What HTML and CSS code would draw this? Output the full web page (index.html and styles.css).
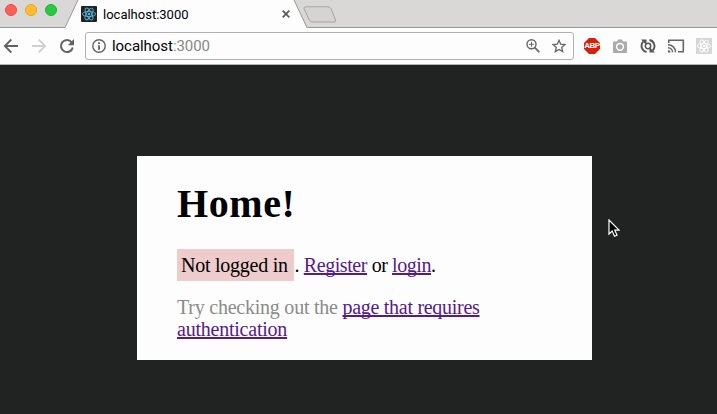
FILE: index.html
```html
<!DOCTYPE html>
<html lang="en">
<head>
<meta charset="utf-8">
<title>localhost:3000</title>
<link rel="stylesheet" href="styles.css">
</head>
<body>
<svg class="defs" width="0" height="0">
  <symbol id="atom" viewBox="0 0 16 16">
    <g fill="none" stroke="currentColor" stroke-width=".9">
      <ellipse cx="8" cy="8" rx="6.6" ry="2.6"/>
      <ellipse cx="8" cy="8" rx="6.6" ry="2.6" transform="rotate(60 8 8)"/>
      <ellipse cx="8" cy="8" rx="6.6" ry="2.6" transform="rotate(120 8 8)"/>
    </g>
    <circle cx="8" cy="8" r="1.3" fill="currentColor"/>
  </symbol>
</svg>
<header class="tabstrip">
  <div class="lights"><i class="red"></i><i class="yellow"></i><i class="green"></i></div>
  <div class="tab">
    <svg class="tab-shape" width="244" height="28" viewBox="0 0 244 28"><path d="M0 28 0 27.5 13 0H229L241.500 27.5 244 28Z" fill="#fdfdfd"/><path d="M0 27.5 13 0M229 0 242 27.5H244" fill="none" stroke="#999" stroke-width="1"/></svg>
    <svg class="favicon" width="16" height="16"><use href="#atom"/></svg>
    <span class="tab-title">localhost:3000</span>
    <svg class="close" width="8" height="8" viewBox="0 0 8 8"><path d="m.7.7 6.6 6.6m0-6.6L.7 7.3" stroke="#5a5a5a" stroke-width="1.7"/></svg>
  </div>
  <svg class="newtab" width="34" height="17" viewBox="0 0 34 17"><path d="M2.5.8H25Q27 .8 28 2.6L32.5 14Q33.2 16 31.5 16H9Q7.300 16 6.500 14.500L1 2.600Q.5.8 2.500.8Z" fill="#d5d4d3" stroke="#a5a4a4"/></svg>
</header>
<nav class="toolbar">
  <svg class="back" width="16" height="16" viewBox="0 0 16 16"><path d="M15 8H2M8.300 1.500 1.800 8l6.500 6.500" fill="none" stroke="#626262" stroke-width="1.800"/></svg>
  <svg class="forward" width="16" height="16" viewBox="0 0 16 16"><path d="M1 8h13M7.700 1.500 14.200 8l-6.500 6.500" fill="none" stroke="#d0d0d0" stroke-width="1.800"/></svg>
  <svg class="reload" width="16" height="16" viewBox="0 0 16 16"><path d="M12.700 4.300A6 6 0 1 0 13.800 9.500" fill="none" stroke="#626262" stroke-width="2"/><path d="M15 1v6.200H8.800Z" fill="#626262"/></svg>
  <div class="omnibox">
    <svg class="info" width="14" height="14" viewBox="0 0 14 14"><circle cx="7" cy="7" r="6.200" fill="none" stroke="#626262" stroke-width="1.400"/><path d="M7 3.300v1.700M7 6.200v4.500" stroke="#555" stroke-width="1.700"/></svg>
    <span class="url">localhost<span class="port">:3000</span></span>
    <svg class="magnify" width="14" height="14" viewBox="0 0 14 14"><g fill="none" stroke="#666"><circle cx="5.500" cy="5.300" r="4.500" stroke-width="1.400"/><path d="m8.800 8.700 4.500 4.500" stroke-width="1.700"/><path d="M3 5.300h5M5.500 2.800v5"/></g></svg>
    <svg class="star" width="14" height="14" viewBox="0 0 14 14"><path d="m7 1.300 1.700 3.900 4.200.4-3.200 2.800 1 4.200L7 10.400l-3.700 2.200 1-4.200L1.100 5.600l4.200-.4Z" fill="none" stroke="#666" stroke-width="1.300"/></svg>
  </div>
  <div class="extensions">
    <div class="adblock"><svg width="16" height="16" viewBox="0 0 16 16"><path d="M5 0h6l5 5v6l-5 5H5l-5-5V5Z" fill="#d71f0c"/></svg><span class="abp">ABP</span></div>
    <svg width="16" height="16" viewBox="0 0 16 16"><path d="M2 3.500h3l1-2h4l1 2h3q1 0 1 1V14q0 1-1 1H2q-1 0-1-1V4.500q0-1 1-1Z" fill="#aaa"/><circle cx="8" cy="8.800" r="3.400" fill="#aaa" stroke="#fff" stroke-width="1.500"/></svg>
    <svg width="16" height="16" viewBox="0 0 16 16"><g fill="none" stroke="#575757" stroke-width="1.900"><path d="M6.500 14A6.200 6.200 0 0 1 3.200 3.700M9.500 2a6.200 6.200 0 0 1 3.300 10.300"/><circle cx="8" cy="8" r="2.700" stroke-width="1.500"/></g><path d="M1 1.500h5.500V7ZM15 14.500H9.500V9Z" fill="#575757"/></svg>
    <svg class="cast" width="18" height="16" viewBox="0 0 18 16"><path d="M1.800 5V2.200h14.500v11.600H11" fill="none" stroke="#666" stroke-width="1.600"/><path d="M1 6.700a7.500 7.500 0 0 1 7.500 7.500M1 9.700a4.500 4.500 0 0 1 4.500 4.500" fill="none" stroke="#666" stroke-width="1.500"/><path d="M1 12a2.500 2.500 0 0 1 2.500 2.500H1Z" fill="#666"/></svg>
    <svg class="react-ext" width="16" height="16"><use href="#atom"/></svg>
  </div>
</nav>
<main class="page">
  <section class="card">
    <h1>Home!</h1>
    <p class="status"><span class="badge">Not logged in</span><span class="rest"> . <a href="#">Register</a> or <a href="#">login</a>.</span></p>
    <p class="hint">Try checking out the <a href="#"><span class="req">page that requires</span><br>authentication</a></p>
  </section>
  <svg class="cursor" width="12" height="19" viewBox="0 0 12 19"><path d="M1 1v14l3.200-3 2.300 5.300 2.500-1.100-2.200-5H11Z" fill="#000" stroke="#fff" stroke-width="1.200"/></svg>
</main>
</body>
</html>
```
FILE: styles.css
```css
* { box-sizing: border-box; }
body {
  margin: 0;
  height: 414px;
  display: flex;
  flex-direction: column;
  overflow: hidden;
  background: #212322;
  font-family: "Liberation Serif", serif;
}
svg { display: block; flex: none; }
.defs { position: absolute; }
.tabstrip {
  height: 28px;
  flex: none;
  display: flex;
  background: #d9d8d7;
  border-bottom: 1px solid #999;
  font-family: Roboto, sans-serif;
}
.lights { width: 65px; display: flex; gap: 8px; padding: 4px 0 0 5px; flex: none; }
.lights i { width: 12px; height: 12px; border-radius: 50%; border: 1px solid; }
.lights .red { background: #ff5f57; border-color: #e94b43; }
.lights .yellow { background: #ffbd2e; border-color: #e5a428; }
.lights .green { background: #28ca42; border-color: #20b237; }
.tab { position: relative; width: 244px; height: 28px; display: flex; align-items: center; padding-left: 16px; flex: none; }
.tab-shape { position: absolute; left: 0; top: 0; }
.favicon { position: relative; color: #53b9d9; background: #222; border-radius: 1px; }
.tab-title { position: relative; width: 178px; padding-left: 6px; font-size: 13px; white-space: nowrap; }
.close { position: relative; margin-left: 7px; }
.newtab { margin: 6px 0 0 -6px; position: relative; }
.toolbar {
  height: 37px;
  flex: none;
  display: flex;
  align-items: center;
  background: #fdfdfd;
  border-bottom: 1px solid #b5b5b5;
  font-family: Roboto, sans-serif;
}
.back { margin-left: 3px; }
.forward { margin-left: 12px; }
.reload { margin-left: 12px; }
.omnibox {
  width: 489px;
  height: 28px;
  margin-left: 10px;
  padding-left: 6px;
  border: 1px solid #b1b1b1;
  border-radius: 3px;
  display: flex;
  align-items: center;
  flex: none;
}
.url { width: 420px; padding-left: 6px; font-size: 15px; letter-spacing: -.05px; white-space: nowrap; }
.port { color: #888; }
.star { margin-left: 12px; }
.extensions { display: flex; align-items: center; gap: 12px; margin-left: 10px; }
.adblock { position: relative; width: 16px; height: 16px; }
.abp { position: absolute; inset: 0; display: flex; justify-content: center; font: bold 8px/16px "Liberation Sans", sans-serif; letter-spacing: -.5px; color: #fff; }
.cast { margin-left: -1px; }
.react-ext { background: #d6d6d6; color: #fff; margin-left: -1px; }
.page { position: relative; flex: 1; padding: 91px 0 0 137px; }
.card { width: 455px; height: 204px; padding: 24px 40px; background: #fdfdfd; font-size: 20px; line-height: 22px; white-space: nowrap; }
h1 { margin: 0; font-size: 40px; line-height: 48px; letter-spacing: .6px; }
.status { display: flex; align-items: center; margin: 21px 0 16px; height: 32px; }
.badge { width: 117px; height: 32px; padding: 5px 4px; background: #efcccc; letter-spacing: -.25px; }
.rest { white-space: pre; margin-left: -4px; letter-spacing: -.42px; }
.hint { margin: -1px 0 0; color: #8b8b89; letter-spacing: -.23px; }
.req { letter-spacing: -.29px; }
a { color: #551a8b; text-decoration: underline 2px; text-underline-offset: 1px; text-decoration-skip-ink: none; }
.cursor { position: absolute; left: 608px; top: 154px; }
```
